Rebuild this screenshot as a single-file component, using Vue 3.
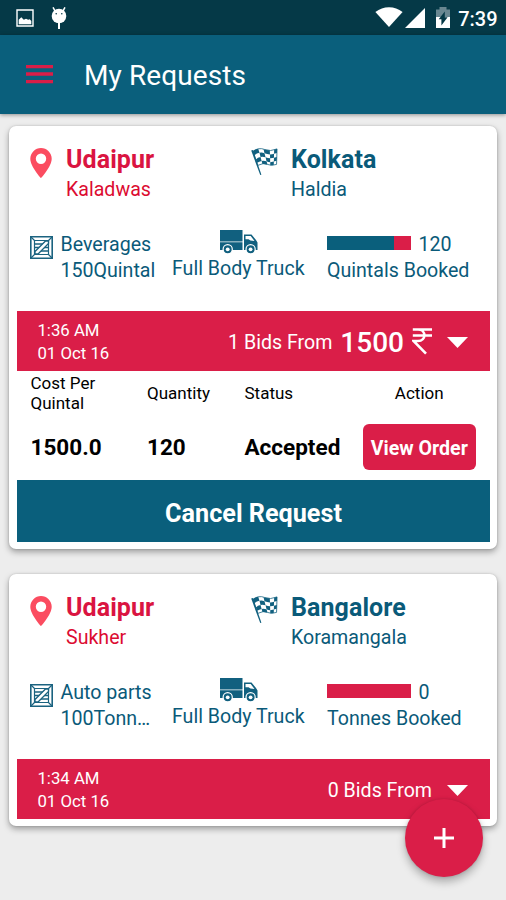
<script setup>
const requests = [
  {
    from: 'Udaipur', fromArea: 'Kaladwas', to: 'Kolkata', toArea: 'Haldia',
    goods: 'Beverages', load: '150Quintal', truck: 'Full Body Truck',
    booked: 120, percent: 80, unit: 'Quintals Booked',
    time: '1:36 AM', date: '01 Oct 16', bids: 1, price: '1500',
    costLabel: 'Cost Per Quintal',
    orders: [{ cost: '1500.0', quantity: 120, status: 'Accepted' }],
  },
  {
    from: 'Udaipur', fromArea: 'Sukher', to: 'Bangalore', toArea: 'Koramangala',
    goods: 'Auto parts', load: '100Tonnes', truck: 'Full Body Truck',
    booked: 0, percent: 0, unit: 'Tonnes Booked',
    time: '1:34 AM', date: '01 Oct 16', bids: 0, price: '',
    orders: [],
  },
]
</script>

<template>
  <div class="screen">
    <div class="status">
      <svg class="i-photo" viewBox="0 0 18 18"><path fill="#fff" fill-rule="evenodd" d="M.3.3h17.4v17.4H.3zM1.700 1.700v14.600h14.600V1.700z" /><path fill="#fff" d="M2.700 15.200v-4.500l2.600-2.500 2.500 2.500 2.200-1 2.200 1 1.500-.4 1.600 1.800v3.100z" /></svg>
      <svg class="i-droid" viewBox="0 0 16 22"><circle cx="8" cy="9" r="7.300" fill="#fff" /><path stroke="#fff" stroke-width="1.500" d="M2 .3l2 3.500M14 .3L12 3.800" /><path stroke="#fff" stroke-width="2" d="M8 15v7" /><circle cx="5.200" cy="6.800" r=".8" fill="#053947" /><circle cx="10.800" cy="6.800" r=".8" fill="#053947" /></svg>
      <span class="grow"></span>
      <svg class="i-wifi" viewBox="0 0 28 20"><path fill="#fff" d="M.4 5Q6.500.2 14 .2T27.600 5L14 20z" /></svg>
      <svg class="i-cell" viewBox="0 0 20 20"><path fill="#fff" d="M20 0v20H0z" /></svg>
      <svg class="i-batt" viewBox="0 0 14 21"><path fill="#698791" d="M0 2.500h3.500V0h7v2.500H14V21H0z" /><path fill="#fff" d="M0 10h14v11H0z" /><path fill="#053947" d="M8.800 4.500v5.700h2.800L5.400 18.500v-6.300H2.700z" /></svg>
      <span class="clock">7:39</span>
    </div>
    <header class="bar">
      <svg class="burger" viewBox="0 0 27 19"><path fill="#da1e48" d="M0 0h27v3.200H0zM0 7.300h27v3.400H0zM0 15h27v3.300H0z" /></svg>
      <h1>My Requests</h1>
    </header>
    <main class="list">
      <article v-for="r in requests" :key="r.time" class="card">
        <section class="route">
          <div class="place from">
            <svg class="pin" viewBox="0 0 22 30"><path fill="#fb4c60" fill-rule="evenodd" d="M11 0A10.700 10.700 0 0 0 .3 10.700C.3 18.500 11 30 11 30s10.700-11.500 10.700-19.300A10.700 10.700 0 0 0 11 0zm0 5.500a5.200 5.200 0 1 1 0 10.400 5.200 5.200 0 0 1 0-10.400z" /></svg>
            <div><h2>{{ r.from }}</h2><p>{{ r.fromArea }}</p></div>
          </div>
          <div class="place to">
            <svg class="flag" viewBox="0 0 28 29">
              <path fill="#fff" stroke="#11607f" stroke-width=".8" d="M2 4Q8-.5 14 2T27 1.500L26.500 17.500Q21 19.500 17 17.500T7 18.500z" />
              <g fill="#11607f">
                <path d="M.2 3.200l1.900-.6L10.800 28.200l-1.200.4z" />
                <path d="M2 4Q4.500 1.700 7.500 1.300l1.300 4.200Q6 6 3.500 8zM13 1.700q3 1.300 6.500 1.200l.2 4.300q-3 0-5.700-1.200z" />
                <path d="M24 2.200l3-.8-.1 4.300-3 .8zM8.800 5.500q2.500-.6 5.200.5l1.100 4.200q-2.800-.9-5.200-.3z" />
                <path d="M19.700 7.200q2.300 0 4.200-.7l-.1 4.200q-2 .6-4 .5zM5 12.300Q7 10.500 9.900 9.900l1.100 4q-2.500.4-4.600 2zM15.100 10.200q2.300 1 4.700 1l.1 4q-2 0-3.800-.9z" />
                <path d="M23.800 10.700l3-.9-.2 3.900-2.900.9zM11 13.900q2.500-.5 5.100.4l1 3.300q-2.600-.9-5.200-.4zM19.900 15.200l3.800-.6-.1 3.600-3.600.2z" />
              </g>
            </svg>
            <div><h2>{{ r.to }}</h2><p>{{ r.toArea }}</p></div>
          </div>
        </section>

        <section class="facts">
          <div class="goods">
            <svg class="crate" viewBox="0 0 23 23" fill="none" stroke="#1b6380">
              <path stroke-width="1.600" d="M.8.8h21.400v21.400H.8z" /><path stroke-width="1.200" d="M4.500 4.500h14v14h-14zM1 1l3.500 3.500M22 1l-3.500 3.500M1 22l3.500-3.500M22 22l-3.500-3.500" />
              <path stroke-width="1.300" d="M4.500 8h14M4.500 11.500h14M4.500 15h14" />
              <path fill="#fff" stroke-width="1.300" d="M5 15.500l10.500-10.500h3v2.500L8 18H5z" />
            </svg>
            <div class="label"><p>{{ r.goods }}</p><p class="load">{{ r.load }}</p></div>
          </div>
          <div class="truck">
            <svg viewBox="0 0 38 24"><path fill="#11607f" d="M0 0h22.500v11.500H0zM0 12.300h22.500V20H0zM24 4.500h7.500L36 10l1.500 2.500V20H24z" /><path fill="#fff" d="M25.500 6h5.200l3.800 5-4-.6-2-1.200h-3z" /><g fill="#11607f" stroke="#fff" stroke-width="1.200"><circle cx="7.700" cy="19.300" r="4.600" /><circle cx="30.600" cy="19.300" r="4.600" /></g><g fill="#fff"><circle cx="7.700" cy="19.300" r="1.900" /><circle cx="30.600" cy="19.300" r="1.900" /></g></svg>
            <p>{{ r.truck }}</p>
          </div>
          <div class="booking">
            <div class="meter"><div class="track"><div class="fill" :style="{ width: r.percent + '%' }"></div></div><span>{{ r.booked }}</span></div>
            <p>{{ r.unit }}</p>
          </div>
        </section>

        <section class="bids">
          <div class="when"><p>{{ r.time }}</p><p>{{ r.date }}</p></div>
          <span class="count">{{ r.bids }} Bids From</span>
          <strong v-if="r.price">{{ r.price }}</strong>
          <svg v-if="r.price" class="rupee" viewBox="0 0 20 27" fill="none" stroke="#fff" stroke-width="2.600"><path d="M.8 1.500H20M.8 7.500H20M1 1.500h5c8.500 0 8.500 11.500 0 11.500H1.500L14 25.700" /></svg>
          <svg class="caret" viewBox="0 0 21 11"><path fill="#fff" d="M0 0h21L10.500 11z" /></svg>
        </section>

        <template v-if="r.orders.length">
          <div class="row head"><span class="cost">{{ r.costLabel }}</span><span>Quantity</span><span>Status</span><span class="action">Action</span></div>
          <div v-for="o in r.orders" :key="o.cost" class="row values"><b>{{ o.cost }}</b><b>{{ o.quantity }}</b><b>{{ o.status }}</b><button class="view">View Order</button></div>
          <button class="cancel">Cancel Request</button>
        </template>
      </article>
    </main>
    <button class="fab"><svg viewBox="0 0 20 20"><path stroke="#fff" stroke-width="3" d="M10 0v20M0 10h20" /></svg></button>
  </div>
</template>

<style>
body { background: #ededed; overflow: hidden; }
</style>

<style scoped>
* { box-sizing: border-box; margin: 0; }
button { border: 0; padding: 0; font-family: inherit; color: #fff; }
svg { display: block; flex: none; }
.screen { position: relative; height: 900px; overflow: hidden; background: #ededed; font-family: Roboto, sans-serif; color: #0a5a79; }
.status { height: 35px; background: #053947; display: flex; align-items: flex-start; padding: 0 8.500px 0 16px; }
.i-photo { width: 18px; height: 18px; margin-top: 8.500px; }
.i-droid { width: 16px; height: 22px; margin: 7px 0 0 17px; }
.grow { flex: 1; }
.i-wifi { width: 28px; height: 20px; margin-top: 7px; }
.i-cell { width: 20px; height: 20px; margin: 8px 0 0 2px; }
.i-batt { width: 14px; height: 21px; margin: 7px 0 0 11px; }
.clock { margin: 5px 0 0 8px; font-size: 20px; line-height: 29px; font-weight: 500; color: #fff; }
.bar { position: relative; height: 79px; background: #0a5f7c; box-shadow: 0 1px 4px rgba(0, 0, 0, .4); display: flex; align-items: center; padding-left: 26px; }
.burger { width: 27px; height: 19px; }
h1 { margin-left: 31px; font-size: 28px; line-height: 34px; font-weight: 400; color: #fff; padding-top: 2px; letter-spacing: .1px; }
.list { display: flex; flex-direction: column; gap: 25px; padding: 12px 9px 0; }
.card { background: #fff; border-radius: 7px; padding: 18px 7px 7px 8px; box-shadow: 0 3px 6px rgba(0, 0, 0, .34), 0 0 2px rgba(0, 0, 0, .18); }
.route { display: flex; height: 86px; padding-left: 13px; }
.place { display: flex; }
.from { width: 221px; color: #da1441; }
.pin { width: 22px; height: 30px; margin: 3.500px 14px 0 0; }
.flag { width: 27px; height: 29px; margin: 3px 13px 0 0; }
h2 { padding-top: 1px; font-size: 25px; line-height: 30px; font-weight: 700; letter-spacing: .08px; }
.place p { margin-top: 2px; font-size: 19.600px; line-height: 26px; }
.from p { color: #dc0b31; }
.facts { display: flex; height: 81px; padding-left: 13px; font-size: 19.600px; line-height: 26px; white-space: nowrap; }
.goods { display: flex; width: 142px; }
.label { width: 97px; padding-top: 2px; }
.crate { width: 23px; height: 23px; margin: 6px 7.500px 0 0; }
.load { overflow: hidden; text-overflow: ellipsis; }
.truck { width: 155px; }
.truck svg { width: 38px; height: 24px; margin: 0 0 2px 48px; }
.booking { padding-top: 2px; }
.meter { display: flex; }
.track { width: 84px; height: 14px; margin: 4px 7.500px 0 0; background: #da1e48; }
.fill { height: 100%; background: #0a5f7c; }
.bids { display: flex; align-items: center; height: 60px; padding: 0 22px 0 20.400px; background: #da1e48; color: #fff; }
.when { flex: 1; font-size: 16.800px; line-height: 23px; padding-top: 2px; }
.count { font-size: 19.600px; line-height: 26px; padding-top: 3px; }
.bids strong { margin-left: 8px; font-size: 28px; line-height: 34px; font-weight: 500; padding-top: 3px; }
.rupee { width: 20px; height: 27px; margin-left: 8px; }
.caret { width: 21px; height: 11px; margin: 2px 0 0 15px; }
.row { display: grid; grid-template-columns: 116.500px 97.500px 118.500px 112.500px; padding-left: 13.500px; align-items: center; color: #000; }
.head { height: 45px; font-size: 17px; line-height: 20px; padding-bottom: 1px; }
.cost { width: 80px; }
.action { text-align: center; }
.values { height: 64px; font-size: 22.500px; line-height: 28px; padding-bottom: 2px; }
.view { height: 46px; border-radius: 6px; background: #da1e48; font-size: 19.600px; font-weight: 700; padding-top: 2px; white-space: nowrap; }
.cancel { display: block; width: 100%; height: 62px; background: #0a5f7c; font-size: 25.200px; font-weight: 700; padding-top: 4px; }
.fab { position: absolute; left: 405px; top: 799px; width: 78px; height: 78px; border-radius: 50%; background: #da1e48; box-shadow: 0 5px 8px rgba(0, 0, 0, .28), 0 0 3px rgba(0, 0, 0, .15); display: grid; place-items: center; }
.fab svg { width: 20px; height: 20px; }
</style>
